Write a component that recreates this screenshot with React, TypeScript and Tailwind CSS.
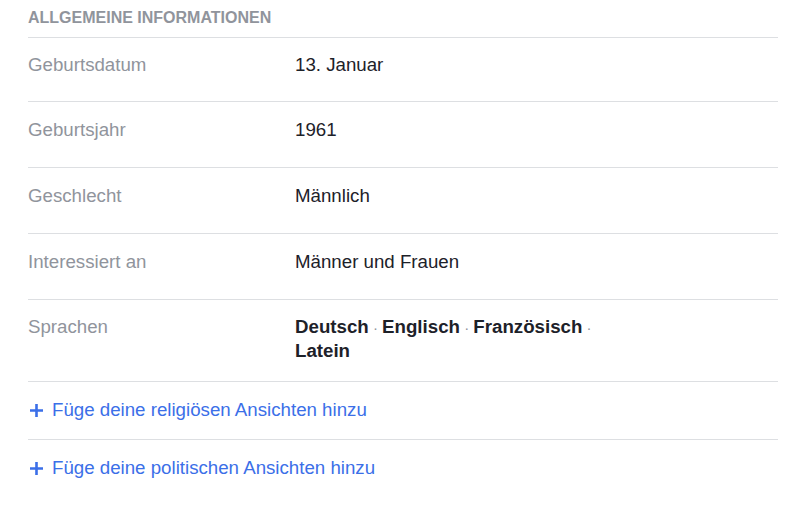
import { Fragment } from 'react';

const rows = [
    { label: 'Geburtsdatum', value: '13. Januar' },
    { label: 'Geburtsjahr', value: '1961' },
    { label: 'Geschlecht', value: 'Männlich' },
    { label: 'Interessiert an', value: 'Männer und Frauen' },
];

const languages = ['Deutsch', 'Englisch', 'Französisch', 'Latein'];

function PlusIcon() {
    return (
        <svg width="13" height="13" viewBox="0 0 13 13" className="shrink-0">
            <path d="M6.5 0v13M0 6.5h13" stroke="#3b6fe8" strokeWidth="2.6" />
        </svg>
    );
}

export default function App() {
    return (
        <div className="bg-white w-[800px] h-[519px] pl-[28px]" style={{ fontFamily: '"Liberation Sans", Arial, sans-serif' }}>
            <div className="w-[750px]">
                <div className="pt-[8px] pb-[9px] border-b border-[#dddfe2] text-[16px] leading-[20px] font-bold text-[#90949c] uppercase">
                    Allgemeine Informationen
                </div>
                {rows.map((row, i) => (
                    <div
                        key={row.label}
                        className={`flex border-b border-[#dddfe2] text-[18.7px] leading-[24px] ${i === 0 ? 'pt-[15px] pb-[24px]' : 'pt-[16px] pb-[25px]'}`}
                    >
                        <div className="w-[267px] text-[#90949c]">{row.label}</div>
                        <div className="text-[#1d2129]">{row.value}</div>
                    </div>
                ))}
                <div className="flex pt-[15px] pb-[18px] border-b border-[#dddfe2] text-[18.7px] leading-[24px]">
                    <div className="w-[267px] text-[#90949c]">Sprachen</div>
                    <div className="w-[310px] text-[#1d2129]">
                        {languages.map((lang, i) => (
                            <Fragment key={lang}>
                                <span className="font-bold">{lang}</span>
                                {i < languages.length - 1 && <span className="text-[#90949c] text-[15px] leading-none"> · </span>}
                            </Fragment>
                        ))}
                    </div>
                </div>
                <div className="flex items-center gap-[9px] pl-[2px] pt-[16px] pb-[17px] border-b border-[#dddfe2] text-[18.7px] leading-[24px] text-[#3b6fe8]">
                    <PlusIcon />
                    <span>Füge deine religiösen Ansichten hinzu</span>
                </div>
                <div className="flex items-center gap-[9px] pl-[2px] pt-[16px] pb-[17px] text-[18.7px] leading-[24px] text-[#3b6fe8]">
                    <PlusIcon />
                    <span>Füge deine politischen Ansichten hinzu</span>
                </div>
            </div>
        </div>
    );
}
